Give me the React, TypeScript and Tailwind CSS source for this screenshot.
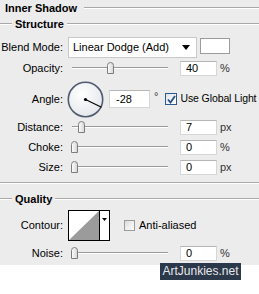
import React from 'react';

const Thumb = () => (
  <svg width="9" height="12" viewBox="0 0 9 12" className="block">
    <defs>
      <linearGradient id="tg" x1="0" y1="0" x2="1" y2="0">
        <stop offset="0" stopColor="#ffffff" />
        <stop offset="1" stopColor="#d4d4d4" />
      </linearGradient>
    </defs>
    <path d="M1.5 11.5 V3.5 Q1.5 0.5 4.5 0.5 Q7.5 0.5 7.5 3.5 V11.5 Z" fill="url(#tg)" stroke="#7d7d7d" strokeWidth="1" />
  </svg>
);

const Slider = ({ pos }: { pos: number }) => (
  <div className="relative w-[96px] h-[14px] ml-[4px]">
    <div className="absolute left-0 right-0 top-[6px] h-px bg-[#9a9a9a]" />
    <div className="absolute left-0 right-0 top-[7px] h-px bg-white" />
    <div className="absolute top-[1px]" style={{ left: pos }}>
      <Thumb />
    </div>
  </div>
);

const Field = ({ value, unit }: { value: string; unit: string }) => (
  <>
    <div className="w-[37px] h-[15px] ml-[12px] bg-white border border-[#d6d6d6] border-t-[#b5b5b5] pl-[5px] text-[11px] leading-[13px]">{value}</div>
    <span className="ml-[3px] text-[11px] text-[#333]">{unit}</span>
  </>
);

const Label = ({ children }: { children: React.ReactNode }) => (
  <div className="w-[63px] shrink-0 text-right text-[11px] whitespace-nowrap">{children}</div>
);

const Etched = ({ className = '' }: { className?: string }) => (
  <div className={`h-[2px] border-t border-[#a9a9a9] border-b border-b-white ${className}`} />
);

const SliderRow = ({ label, pos, value, unit }: { label: string; pos: number; value: string; unit: string }) => (
  <div className="h-[20px] flex items-center">
    <Label>{label}</Label>
    <div className="ml-[5px] flex items-center">
      <Slider pos={pos} />
      <Field value={value} unit={unit} />
    </div>
  </div>
);

export default function App() {
  return (
    <div
      className="relative w-[259px] h-[294px] bg-white text-black overflow-hidden"
      style={{ fontFamily: '"Liberation Sans", Arial, sans-serif' }}
    >
      <div className="bg-[#ececec] pb-[4px]">
        {/* title */}
        <div className="h-[16px] flex items-center">
          <span className="pl-[5px] font-bold text-[11px]">Inner Shadow</span>
          <Etched className="flex-1 ml-[7px]" />
        </div>

        {/* structure header */}
        <div className="h-[14px] mt-[1px] flex items-center">
          <Etched className="w-[12px]" />
          <span className="px-[3px] font-bold text-[11px]">Structure</span>
          <Etched className="flex-1" />
        </div>

        {/* blend mode */}
        <div className="mt-[6px] flex items-start">
          <div className="h-[21px] flex items-center">
            <Label>Blend Mode:</Label>
          </div>
          <div className="ml-[5px] w-[129px] h-[21px] bg-white border border-[#c9c9c9] flex items-center justify-between pl-[4px] pr-[6px]">
            <span className="text-[11px] whitespace-nowrap">Linear Dodge (Add)</span>
            <svg width="8" height="5" viewBox="0 0 8 5"><path d="M0 0 H8 L4 5 Z" fill="#000" /></svg>
          </div>
          <div className="ml-[3px] mt-[1px] w-[30px] h-[16px] bg-white border border-[#9c9c9c]" />
        </div>

        {/* opacity */}
        <div className="mt-[3px] h-[14px] flex items-center">
          <Label>Opacity:</Label>
          <div className="ml-[5px] flex items-center">
            <Slider pos={34} />
            <Field value="40" unit="%" />
          </div>
        </div>

        {/* angle */}
        <div className="mt-[6px] h-[36px] flex items-center">
          <Label>Angle:</Label>
          <svg width="37" height="37" viewBox="0 0 37 37" className="ml-[4px] shrink-0">
            <defs>
              <radialGradient id="cg" cx="0.4" cy="0.35" r="0.7">
                <stop offset="0" stopColor="#ffffff" />
                <stop offset="1" stopColor="#e4e6ea" />
              </radialGradient>
            </defs>
            <circle cx="18.5" cy="18.5" r="17.2" fill="url(#cg)" stroke="#4f5b6e" strokeWidth="1.6" />
            <line x1="18.5" y1="18.5" x2="34.5" y2="26.2" stroke="#000" strokeWidth="1.2" />
            <circle cx="18.5" cy="18.5" r="1.6" fill="#000" />
          </svg>
          <div className="ml-[5px] w-[41px] h-[18px] shrink-0 bg-white border border-[#d6d6d6] border-t-[#b5b5b5] pl-[6px] text-[11px] leading-[16px]">-28</div>
          <span className="ml-[4px] text-[11px] text-[#333] -mt-[5px]">°</span>
          <div className="ml-[7px] w-[12px] h-[12px] shrink-0 border border-[#2c5a8c] bg-gradient-to-br from-[#dfe3ea] to-white flex items-center justify-center">
            <svg width="9" height="9" viewBox="0 0 9 9"><path d="M1 4.5 L3.5 7.5 L8 1" fill="none" stroke="#2a4f86" strokeWidth="1.8" /></svg>
          </div>
          <span className="ml-[3px] text-[10.5px] whitespace-nowrap tracking-[-0.1px]">Use Global Light</span>
        </div>

        <SliderRow label="Distance:" pos={5} value="7" unit="px" />
        <SliderRow label="Choke:" pos={-2} value="0" unit="%" />
        <SliderRow label="Size:" pos={-2} value="0" unit="px" />

        <Etched className="mt-[5px]" />

        {/* quality header */}
        <div className="mt-[8px] h-[14px] flex items-center">
          <Etched className="w-[12px]" />
          <span className="px-[3px] font-bold text-[11px]">Quality</span>
          <Etched className="flex-1" />
        </div>

        {/* contour */}
        <div className="mt-[4px] h-[31px] flex items-center">
          <Label>Contour:</Label>
          <div className="ml-[5px] w-[42px] h-[31px] border border-black bg-white flex">
            <svg width="30" height="29" viewBox="0 0 30 29" className="block">
              <rect width="30" height="29" fill="#fff" />
              <path d="M0 29 L30 0 V29 Z" fill="#9b9b9b" />
            </svg>
            <div className="flex-1 border-l border-black flex justify-center pt-[7px]">
              <svg width="5" height="3" viewBox="0 0 5 3"><path d="M0 0 H5 L2.5 3 Z" fill="#000" /></svg>
            </div>
          </div>
          <div className="ml-[14px] w-[11px] h-[11px] border border-[#9a9a9a] bg-gradient-to-br from-[#dcdcdc] to-white" />
          <span className="ml-[4px] text-[11px]">Anti-aliased</span>
        </div>

        {/* noise */}
        <div className="mt-[4px] h-[16px] flex items-center">
          <Label>Noise:</Label>
          <div className="ml-[5px] flex items-center">
            <Slider pos={-2} />
            <Field value="0" unit="%" />
          </div>
        </div>
      </div>

      <div className="absolute left-[160px] top-[263px] w-[81px] h-[17px] bg-[#2c394b] text-[#e8e8e8] text-[12px] leading-[17px] text-center whitespace-nowrap">
        ArtJunkies.net
      </div>
    </div>
  );
}
